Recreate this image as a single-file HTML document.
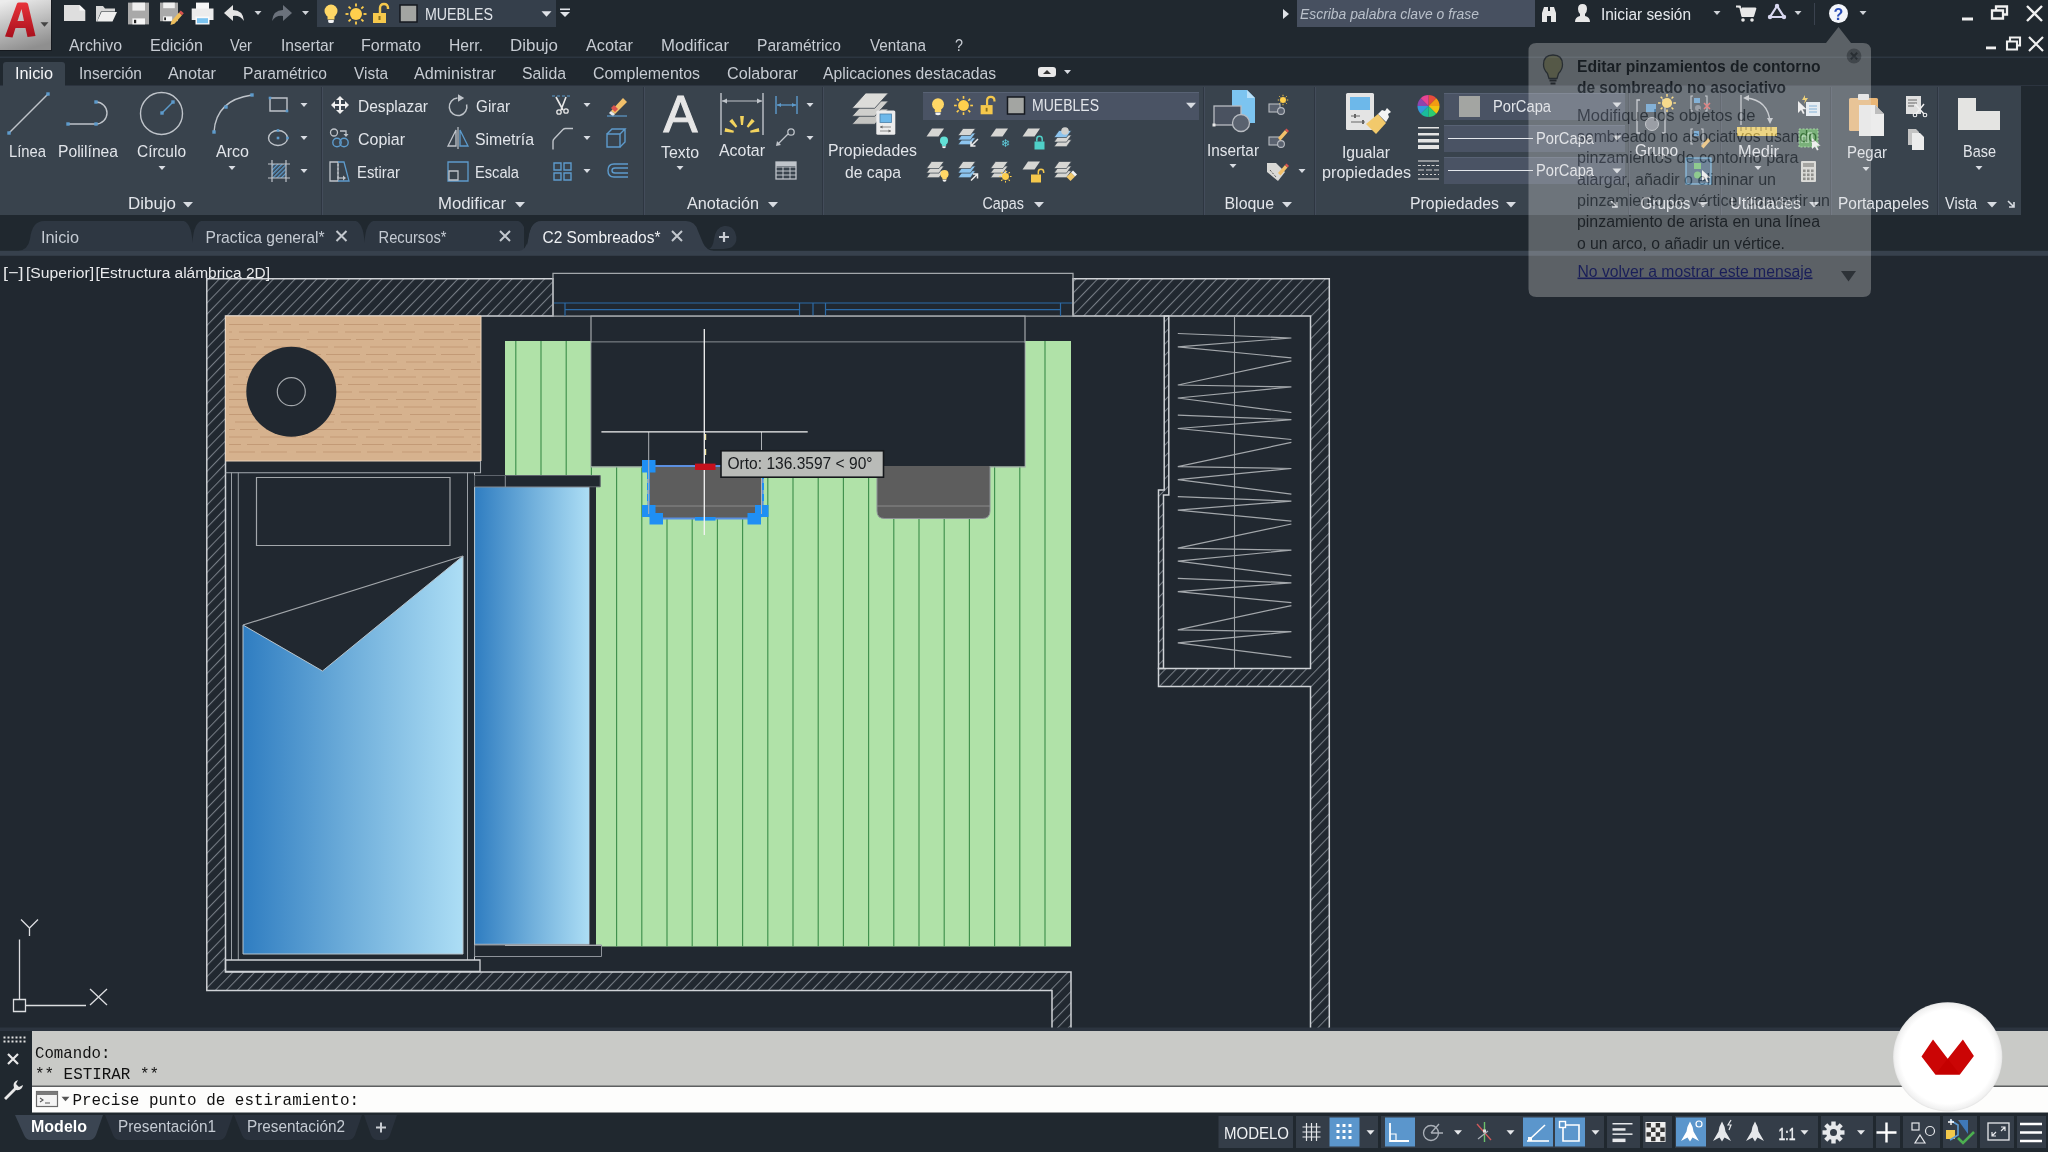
<!DOCTYPE html>
<html lang="es"><head><meta charset="utf-8"><title>AutoCAD - C2 Sombreados</title>
<style>
html,body{margin:0;padding:0;background:#212830;overflow:hidden}
svg{display:block;font-family:'Liberation Sans',sans-serif;will-change:transform;transform:translateZ(0)}
text{white-space:pre}
</style></head><body>
<svg width="2048" height="1152" viewBox="0 0 2048 1152">
<!-- p_chrome -->
<rect x="0" y="0" width="2048" height="1152" fill="#212830" />
<rect x="0" y="0" width="2048" height="256" fill="#20282f" />
<rect x="0" y="56.5" width="2048" height="1.6" fill="#2c3641" />
<rect x="0" y="86" width="2021" height="129" fill="#39434d" />
<rect x="0" y="85" width="2048" height="1" fill="#2c343f" />
<path d="M3 86V65q0-3 3-3h56q3 0 3 3V86z" fill="#39434d" stroke="none" stroke-width="1" />
<rect x="0" y="250.8" width="2048" height="5" fill="#37414d" />
<defs><linearGradient id="gA" x1="0.2" y1="0" x2="0.5" y2="1"><stop offset="0" stop-color="#ececec"/><stop offset="0.5" stop-color="#bdbdbd"/><stop offset="1" stop-color="#8f8f8f"/></linearGradient><linearGradient id="gR" x1="0" y1="0" x2="0" y2="1"><stop offset="0" stop-color="#e8343a"/><stop offset="1" stop-color="#a80f1c"/></linearGradient></defs>
<rect x="0" y="0" width="51" height="50" fill="url(#gA)" />
<rect x="51" y="0" width="1" height="51" fill="#15191f" />
<rect x="0" y="50" width="52" height="1" fill="#15191f" />
<path d="M5 36.5L17 3.5Q17.5 2.5 19 2.5H26Q27.5 2.5 28 4L35.5 36L27.5 37L25.5 28H15.5L12.5 37.5Z M17.5 21H24L21.5 9Z" fill="url(#gR)" stroke="none" stroke-width="1" fill-rule="evenodd"/>
<path d="M40.5 22.25h8l-4.0 4.5z" fill="#444"/>
<path d="M64 5h15.5l5.8 5.5V21H64z" fill="#dedede" stroke="none" stroke-width="1" />
<path d="M79.5 5v5.5h5.8z" fill="#fafafa" stroke="none" stroke-width="1" />
<path d="M96 21.5V6h7l2 2.5h10v3H101l-4 10z" fill="#d8d8d8" stroke="none" stroke-width="1" />
<path d="M101.5 12h15.5l-4.5 9.5H97z" fill="#efefef" stroke="none" stroke-width="1" />
<path d="M128 2.6h21v21.8h-21z" fill="#a9a9a9" stroke="none" stroke-width="1" />
<rect x="132.4" y="2.6" width="12.6" height="8" fill="#efefef" />
<rect x="132.4" y="18.4" width="12.6" height="6" fill="#f6f6f6" />
<rect x="134" y="19.8" width="2.2" height="3.4" fill="#222" />
<path d="M160 2.6h18v18.6h-18z" fill="#a9a9a9" stroke="none" stroke-width="1" />
<rect x="163.2" y="2.6" width="11.6" height="5.6" fill="#efefef" />
<rect x="163.2" y="16.4" width="9" height="4.8" fill="#f6f6f6" />
<rect x="164.2" y="17.4" width="1.8" height="2.8" fill="#222" />
<path d="M171.5 21l7.5-8.5 3 2.7-7.5 8.5-4 1.3z" fill="#eebf5e" stroke="none" stroke-width="1" />
<path d="M179 12.5l1.8-2 3 2.7-1.8 2z" fill="#d9534f" stroke="none" stroke-width="1" />
<rect x="196" y="2.6" width="13" height="7" fill="#f7f7f7" />
<path d="M191.7 8.5h21.8v11.5h-21.8z" fill="#ececec" stroke="none" stroke-width="1" />
<rect x="195.5" y="16.5" width="14" height="8" fill="#fafafa" />
<rect x="197" y="18.2" width="11" height="5" fill="#7cc4f0" />
<path d="M224 13l9-8v5q10 0 11 11q-4-6-11-5v5z" fill="#e4e4e4" stroke="none" stroke-width="1" />
<path d="M254.5 11.0h7l-3.5 4z" fill="#cfd3d8"/>
<path d="M292 13l-9-8v5q-10 0-11 11q4-6 11-5v5z" fill="#6b727c" stroke="none" stroke-width="1" />
<path d="M302.0 11.0h7l-3.5 4z" fill="#cfd3d8"/>
<rect x="317" y="0" width="239" height="27" fill="#353f4b" />
<g transform="translate(331,14) scale(1.0)"><circle cx="0" cy="-3" r="6.5" fill="#ffd766"/><path d="M-3.5 2h7v3.5h-7z" fill="#ffd766"/><path d="M-2.8 6h5.6v2.2q-2.8 1.8-5.6 0z" fill="#f4f4f4"/></g>
<g transform="translate(356,14) scale(1.0)"><circle r="6" fill="#ffcf4d"/><line x1="0" y1="-7.5" x2="0" y2="-10.5" transform="rotate(0)" stroke="#ffcf4d" stroke-width="1.8"/><line x1="0" y1="-7.5" x2="0" y2="-10.5" transform="rotate(45)" stroke="#ffcf4d" stroke-width="1.8"/><line x1="0" y1="-7.5" x2="0" y2="-10.5" transform="rotate(90)" stroke="#ffcf4d" stroke-width="1.8"/><line x1="0" y1="-7.5" x2="0" y2="-10.5" transform="rotate(135)" stroke="#ffcf4d" stroke-width="1.8"/><line x1="0" y1="-7.5" x2="0" y2="-10.5" transform="rotate(180)" stroke="#ffcf4d" stroke-width="1.8"/><line x1="0" y1="-7.5" x2="0" y2="-10.5" transform="rotate(225)" stroke="#ffcf4d" stroke-width="1.8"/><line x1="0" y1="-7.5" x2="0" y2="-10.5" transform="rotate(270)" stroke="#ffcf4d" stroke-width="1.8"/><line x1="0" y1="-7.5" x2="0" y2="-10.5" transform="rotate(315)" stroke="#ffcf4d" stroke-width="1.8"/></g>
<g transform="translate(381,14) scale(1.0)"><path d="M-1 -1v-5q0-4 4-4t4 4v1" fill="none" stroke="#f5c84c" stroke-width="2.4"/><rect x="-8" y="-1" width="13" height="10" fill="#f5c84c"/><rect x="-2.5" y="2" width="2" height="4" fill="#8a6d1c"/></g>
<rect x="400" y="5" width="17" height="17" fill="#a3a5a2" stroke="#15191f" stroke-width="1.5"/>
<text x="425" y="20" font-size="16.3" fill="#dfe3e8" textLength="68" lengthAdjust="spacingAndGlyphs" >MUEBLES</text>
<path d="M541.5 11.25h10l-5.0 5.5z" fill="#e0e3e8"/>
<rect x="560" y="8.5" width="10" height="1.6" fill="#e0e3e8" />
<path d="M560.0 12.0h10l-5.0 5z" fill="#e0e3e8"/>
<text x="69" y="50.8" font-size="16.3" fill="#c6cbd2" textLength="53" lengthAdjust="spacingAndGlyphs" >Archivo</text>
<text x="150" y="50.8" font-size="16.3" fill="#c6cbd2" textLength="53" lengthAdjust="spacingAndGlyphs" >Edición</text>
<text x="230" y="50.8" font-size="16.3" fill="#c6cbd2" textLength="22" lengthAdjust="spacingAndGlyphs" >Ver</text>
<text x="281" y="50.8" font-size="16.3" fill="#c6cbd2" textLength="53" lengthAdjust="spacingAndGlyphs" >Insertar</text>
<text x="361" y="50.8" font-size="16.3" fill="#c6cbd2" textLength="60" lengthAdjust="spacingAndGlyphs" >Formato</text>
<text x="449" y="50.8" font-size="16.3" fill="#c6cbd2" textLength="34" lengthAdjust="spacingAndGlyphs" >Herr.</text>
<text x="510" y="50.8" font-size="16.3" fill="#c6cbd2" textLength="48" lengthAdjust="spacingAndGlyphs" >Dibujo</text>
<text x="586" y="50.8" font-size="16.3" fill="#c6cbd2" textLength="47" lengthAdjust="spacingAndGlyphs" >Acotar</text>
<text x="661" y="50.8" font-size="16.3" fill="#c6cbd2" textLength="68" lengthAdjust="spacingAndGlyphs" >Modificar</text>
<text x="757" y="50.8" font-size="16.3" fill="#c6cbd2" textLength="84" lengthAdjust="spacingAndGlyphs" >Paramétrico</text>
<text x="870" y="50.8" font-size="16.3" fill="#c6cbd2" textLength="56" lengthAdjust="spacingAndGlyphs" >Ventana</text>
<text x="955" y="50.8" font-size="16.3" fill="#c6cbd2" textLength="8" lengthAdjust="spacingAndGlyphs" >?</text>
<text x="15" y="78.5" font-size="16.3" fill="#f4f5f7" textLength="38" lengthAdjust="spacingAndGlyphs" >Inicio</text>
<text x="79" y="78.5" font-size="16.3" fill="#c6cbd2" textLength="63" lengthAdjust="spacingAndGlyphs" >Inserción</text>
<text x="168" y="78.5" font-size="16.3" fill="#c6cbd2" textLength="48" lengthAdjust="spacingAndGlyphs" >Anotar</text>
<text x="243" y="78.5" font-size="16.3" fill="#c6cbd2" textLength="84" lengthAdjust="spacingAndGlyphs" >Paramétrico</text>
<text x="354" y="78.5" font-size="16.3" fill="#c6cbd2" textLength="34" lengthAdjust="spacingAndGlyphs" >Vista</text>
<text x="414" y="78.5" font-size="16.3" fill="#c6cbd2" textLength="82" lengthAdjust="spacingAndGlyphs" >Administrar</text>
<text x="522" y="78.5" font-size="16.3" fill="#c6cbd2" textLength="44" lengthAdjust="spacingAndGlyphs" >Salida</text>
<text x="593" y="78.5" font-size="16.3" fill="#c6cbd2" textLength="107" lengthAdjust="spacingAndGlyphs" >Complementos</text>
<text x="727" y="78.5" font-size="16.3" fill="#c6cbd2" textLength="71" lengthAdjust="spacingAndGlyphs" >Colaborar</text>
<text x="823" y="78.5" font-size="16.3" fill="#c6cbd2" textLength="173" lengthAdjust="spacingAndGlyphs" >Aplicaciones destacadas</text>
<rect x="1038" y="67" width="18" height="10" fill="#e8e8e8" rx="3"/>
<path d="M1043 74l4-4 4 4z" fill="#333" stroke="none" stroke-width="1" />
<path d="M1064.0 70.0h7l-3.5 4z" fill="#d8dce2"/>
<path d="M1283 9v10l6-5z" fill="#e0e3e8" stroke="none" stroke-width="1" />
<rect x="1297" y="0" width="238" height="27" fill="#475060" />
<text x="1300" y="19" font-size="14.5" fill="#b9c0ca" textLength="179" lengthAdjust="spacingAndGlyphs" font-style="italic" >Escriba palabra clave o frase</text>
<path d="M1542 22v-9l2-6h4v4h2V7h4l2 6v9h-5v-6h-4v6z" fill="#e8e8e8" stroke="none" stroke-width="1" />
<path d="M1575 22q0-5 5-6v-2q-2-2-2-5q0-5 4.5-5t4.5 5q0 3-2 5v2q5 1 5 6z" fill="#e8e8e8" stroke="none" stroke-width="1" />
<text x="1601" y="19.5" font-size="16.3" fill="#e6e9ee" textLength="90" lengthAdjust="spacingAndGlyphs" >Iniciar sesión</text>
<path d="M1713.5 11.0h7l-3.5 4z" fill="#cfd3d8"/>
<path d="M1736 6.5h4l2.2 9.5h11l2.3-7.5h-13.5" fill="#e8e8e8" stroke="#e8e8e8" stroke-width="1.8" stroke-linejoin="round"/>
<circle cx="1743" cy="20" r="1.8" fill="#e8e8e8"/><circle cx="1752" cy="20" r="1.8" fill="#e8e8e8"/>
<path d="M1777 6l-7 11h14z" fill="none" stroke="#d8d8f0" stroke-width="2.2" />
<circle cx="1777" cy="6" r="2.2" fill="#d8d8f0"/><circle cx="1770" cy="17" r="2.2" fill="#d8d8f0"/><circle cx="1784" cy="17" r="2.2" fill="#d8d8f0"/>
<path d="M1794.5 11.0h7l-3.5 4z" fill="#cfd3d8"/>
<rect x="1814" y="3" width="1" height="22" fill="#3a424e" />
<circle cx="1838.5" cy="13.5" r="9.5" fill="#f4f6fb"/>
<text x="1838.5" y="19.5" font-size="16" fill="#2c4fb8" font-weight="bold" text-anchor="middle" >?</text>
<path d="M1859.5 11.0h7l-3.5 4z" fill="#cfd3d8"/>
<rect x="1962" y="17.5" width="11" height="3" fill="#f0f0f0" />
<path d="M1992 10.5h11v8h-11z M1996 10V6.5h11v8h-4" fill="none" stroke="#f0f0f0" stroke-width="2.3" />
<path d="M2027 6l15 15M2042 6l-15 15" fill="none" stroke="#f0f0f0" stroke-width="2.4" />
<rect x="1986" y="46.5" width="10" height="2.8" fill="#f0f0f0" />
<path d="M2007 41.5h10v8h-10z M2010 41v-3.5h10v8h-3" fill="none" stroke="#f0f0f0" stroke-width="2.1" />
<path d="M2029 37l14 14M2043 37l-14 14" fill="none" stroke="#f0f0f0" stroke-width="2.2" />
<path d="M18 251Q28 250 30 239Q32 221 44 221H524V251Z" fill="#2e3742" stroke="none" stroke-width="1" />
<path d="M181.5 220.5Q191.5 221 192.5 243Q193.5 221 203.5 220.5Z" fill="#20282f" stroke="none" stroke-width="1" />
<path d="M353.5 220.5Q363.5 221 364.5 243Q365.5 221 375.5 220.5Z" fill="#20282f" stroke="none" stroke-width="1" />
<path d="M519 251Q526 250 528 240Q530 221 541 221H686Q695 221 698 231L703 243Q706 250 714 251Z" fill="#363f4b" stroke="none" stroke-width="1" />
<path d="M516 220.5Q526 221 527.5 245Q529 221 540 220.5Z" fill="#20282f" stroke="none" stroke-width="1" />
<path d="M709 249q4-2 5-10q2-12 10-13q8-1 11 6q4 10-3 15q-4 2-12 2z" fill="#2e3742" stroke="none" stroke-width="1" />
<text x="41" y="243" font-size="16.3" fill="#c4cad2" textLength="38" lengthAdjust="spacingAndGlyphs" >Inicio</text>
<text x="205.5" y="243" font-size="16.3" fill="#c4cad2" textLength="119" lengthAdjust="spacingAndGlyphs" >Practica general*</text>
<text x="378.5" y="243" font-size="16.3" fill="#c4cad2" textLength="68" lengthAdjust="spacingAndGlyphs" >Recursos*</text>
<text x="542.5" y="243" font-size="16.3" fill="#eef0f3" textLength="118" lengthAdjust="spacingAndGlyphs" >C2 Sombreados*</text>
<path d="M336.5 231l10 10M346.5 231l-10 10" fill="none" stroke="#c3c8ce" stroke-width="2" />
<path d="M500 231l10 10M510 231l-10 10" fill="none" stroke="#c3c8ce" stroke-width="2" />
<path d="M672 231l10 10M682 231l-10 10" fill="none" stroke="#c3c8ce" stroke-width="2" />
<path d="M719 237h10M724 232v10" fill="none" stroke="#c8ccd2" stroke-width="2.2" />
<!-- p_ribbon -->
<rect x="321" y="87" width="1" height="128" fill="#2e3641" />
<rect x="322" y="87" width="1" height="128" fill="#434c5a" />
<rect x="643" y="87" width="1" height="128" fill="#2e3641" />
<rect x="644" y="87" width="1" height="128" fill="#434c5a" />
<rect x="822" y="87" width="1" height="128" fill="#2e3641" />
<rect x="823" y="87" width="1" height="128" fill="#434c5a" />
<rect x="1203" y="87" width="1" height="128" fill="#2e3641" />
<rect x="1204" y="87" width="1" height="128" fill="#434c5a" />
<rect x="1314" y="87" width="1" height="128" fill="#2e3641" />
<rect x="1315" y="87" width="1" height="128" fill="#434c5a" />
<rect x="1628" y="87" width="1" height="128" fill="#2e3641" />
<rect x="1629" y="87" width="1" height="128" fill="#434c5a" />
<rect x="1720" y="87" width="1" height="128" fill="#2e3641" />
<rect x="1721" y="87" width="1" height="128" fill="#434c5a" />
<rect x="1830" y="87" width="1" height="128" fill="#2e3641" />
<rect x="1831" y="87" width="1" height="128" fill="#434c5a" />
<rect x="1937" y="87" width="1" height="128" fill="#2e3641" />
<rect x="1938" y="87" width="1" height="128" fill="#434c5a" />
<text x="128" y="209.3" font-size="16.3" fill="#e2e5ea" textLength="48" lengthAdjust="spacingAndGlyphs" >Dibujo</text>
<path d="M183.0 202.05h10l-5.0 5.5z" fill="#d8dce2"/>
<text x="438" y="209.3" font-size="16.3" fill="#e2e5ea" textLength="68" lengthAdjust="spacingAndGlyphs" >Modificar</text>
<path d="M515.0 202.05h10l-5.0 5.5z" fill="#d8dce2"/>
<text x="687" y="209.3" font-size="16.3" fill="#e2e5ea" textLength="72" lengthAdjust="spacingAndGlyphs" >Anotación</text>
<path d="M768.0 202.05h10l-5.0 5.5z" fill="#d8dce2"/>
<text x="982.5" y="209.3" font-size="16.3" fill="#e2e5ea" textLength="41.5" lengthAdjust="spacingAndGlyphs" >Capas</text>
<path d="M1034.0 202.05h10l-5.0 5.5z" fill="#d8dce2"/>
<text x="1224.5" y="209.3" font-size="16.3" fill="#e2e5ea" textLength="49.5" lengthAdjust="spacingAndGlyphs" >Bloque</text>
<path d="M1282.0 202.05h10l-5.0 5.5z" fill="#d8dce2"/>
<text x="1410" y="209.3" font-size="16.3" fill="#e2e5ea" textLength="89" lengthAdjust="spacingAndGlyphs" >Propiedades</text>
<path d="M1506.0 202.05h10l-5.0 5.5z" fill="#d8dce2"/>
<text x="1640.5" y="209.3" font-size="16.3" fill="#e2e5ea" textLength="50.0" lengthAdjust="spacingAndGlyphs" >Grupos</text>
<path d="M1698.0 202.05h10l-5.0 5.5z" fill="#d8dce2"/>
<text x="1730" y="209.3" font-size="16.3" fill="#e2e5ea" textLength="71" lengthAdjust="spacingAndGlyphs" >Utilidades</text>
<path d="M1809.0 202.05h10l-5.0 5.5z" fill="#d8dce2"/>
<text x="1838" y="209.3" font-size="16.3" fill="#e2e5ea" textLength="91" lengthAdjust="spacingAndGlyphs" >Portapapeles</text>
<text x="1945" y="209.3" font-size="16.3" fill="#e2e5ea" textLength="32" lengthAdjust="spacingAndGlyphs" >Vista</text>
<path d="M1987.0 202.05h10l-5.0 5.5z" fill="#d8dce2"/>
<path d="M2008 201l6 6M2014 202v5h-5" fill="none" stroke="#d8dce2" stroke-width="1.6" />
<path d="M1611 201l6 6M1617 202v5h-5" fill="none" stroke="#d8dce2" stroke-width="1.6" />
<line x1="9" y1="133" x2="48" y2="94" stroke="#bfc4ca" stroke-width="1.4" />
<rect x="7.3" y="131.3" width="3.4" height="3.4" fill="#5d9bcc" />
<rect x="46.3" y="92.3" width="3.4" height="3.4" fill="#5d9bcc" />
<text x="9" y="156.6" font-size="16.3" fill="#e2e5ea" textLength="37" lengthAdjust="spacingAndGlyphs" >Línea</text>
<path d="M68 124H96A11 11 0 0 0 96 102" fill="none" stroke="#bfc4ca" stroke-width="1.4" />
<rect x="66.3" y="122.3" width="3.4" height="3.4" fill="#5d9bcc" />
<rect x="94.3" y="122.3" width="3.4" height="3.4" fill="#5d9bcc" />
<rect x="94.3" y="100.3" width="3.4" height="3.4" fill="#5d9bcc" />
<text x="58" y="156.6" font-size="16.3" fill="#e2e5ea" textLength="60" lengthAdjust="spacingAndGlyphs" >Polilínea</text>
<circle cx="161.5" cy="113.5" r="21" fill="none" stroke="#bfc4ca" stroke-width="1.4"/>
<line x1="162" y1="113" x2="173" y2="102" stroke="#5d9bcc" stroke-width="1.5" />
<rect x="160.3" y="111.3" width="3.4" height="3.4" fill="#5d9bcc" />
<rect x="171.3" y="100.3" width="3.4" height="3.4" fill="#5d9bcc" />
<text x="137" y="157.4" font-size="16.3" fill="#e2e5ea" textLength="49" lengthAdjust="spacingAndGlyphs" >Círculo</text>
<path d="M158.5 166.0h7l-3.5 4z" fill="#d8dce2"/>
<path d="M214 132Q216 100 252 95" fill="none" stroke="#bfc4ca" stroke-width="1.4" />
<rect x="212.3" y="130.3" width="3.4" height="3.4" fill="#5d9bcc" />
<rect x="224.3" y="105.3" width="3.4" height="3.4" fill="#5d9bcc" />
<rect x="250.3" y="93.3" width="3.4" height="3.4" fill="#5d9bcc" />
<text x="216" y="157.4" font-size="16.3" fill="#e2e5ea" textLength="33" lengthAdjust="spacingAndGlyphs" >Arco</text>
<path d="M228.5 166.0h7l-3.5 4z" fill="#d8dce2"/>
<path d="M270 98h17v13h-17z" fill="none" stroke="#bfc4ca" stroke-width="1.4" />
<rect x="268.7" y="96.7" width="2.6" height="2.6" fill="#5d9bcc" />
<rect x="285.7" y="109.7" width="2.6" height="2.6" fill="#5d9bcc" />
<ellipse cx="278" cy="138" rx="9.5" ry="7.5" fill="none" stroke="#bfc4ca" stroke-width="1.4"/>
<rect x="276.7" y="136.7" width="2.6" height="2.6" fill="#5d9bcc" />
<rect x="286.2" y="136.7" width="2.6" height="2.6" fill="#5d9bcc" />
<rect x="276.7" y="129.2" width="2.6" height="2.6" fill="#5d9bcc" />
<pattern id="hh" width="3" height="3" patternUnits="userSpaceOnUse" patternTransform="rotate(-45)"><rect width="3" height="1.4" fill="#5d9bcc"/></pattern>
<rect x="272" y="164" width="14" height="14" fill="url(#hh)" />
<path d="M272 160v22M286 160v22M268 164h22M268 178h22" fill="none" stroke="#bfc4ca" stroke-width="1.2" />
<path d="M300.5 103.0h7l-3.5 4z" fill="#d8dce2"/>
<path d="M300.5 136.0h7l-3.5 4z" fill="#d8dce2"/>
<path d="M300.5 169.0h7l-3.5 4z" fill="#d8dce2"/>
<path d="M340 96l4 4h-3v4h4v-3l4 4-4 4v-3h-4v4h3l-4 4-4-4h3v-4h-4v3l-4-4 4-4v3h4v-4h-3z" fill="#f0f0f0" stroke="none" stroke-width="1" />
<text x="358" y="112" font-size="16.3" fill="#e2e5ea" textLength="70" lengthAdjust="spacingAndGlyphs" >Desplazar</text>
<circle cx="334" cy="132.5" r="3.5" fill="none" stroke="#bfc4ca" stroke-width="1.3"/>
<circle cx="337" cy="142.5" r="4.2" fill="none" stroke="#5d9bcc" stroke-width="1.4"/><circle cx="344" cy="142.5" r="4.2" fill="none" stroke="#5d9bcc" stroke-width="1.4"/>
<path d="M340 131h6v4" fill="none" stroke="#bfc4ca" stroke-width="1.3" />
<path d="M343.5 134h5l-2.5 3z" fill="#bfc4ca" stroke="none" stroke-width="1" />
<text x="358" y="145" font-size="16.3" fill="#e2e5ea" textLength="47" lengthAdjust="spacingAndGlyphs" >Copiar</text>
<path d="M330 162h8v19h-8z" fill="none" stroke="#bfc4ca" stroke-width="1.3" />
<path d="M338 162h6l5 19h-11" fill="none" stroke="#5d9bcc" stroke-width="1.3" />
<path d="M338 164v14" fill="none" stroke="#bfc4ca" stroke-width="1" stroke-dasharray="2 2"/>
<path d="M337 178h7" fill="none" stroke="#bfc4ca" stroke-width="1.2" />
<path d="M343 175.5l3 2.5-3 2.5z" fill="#bfc4ca" stroke="none" stroke-width="1" />
<text x="357" y="178" font-size="16.3" fill="#e2e5ea" textLength="43" lengthAdjust="spacingAndGlyphs" >Estirar</text>
<path d="M457.5 98A8.8 8.8 0 1 0 466.6 104.5" fill="none" stroke="#bfc4ca" stroke-width="1.5" />
<path d="M458 94.3l6.2 3.7-6.2 3.7z" fill="#bfc4ca" stroke="none" stroke-width="1" />
<text x="476" y="112" font-size="16.3" fill="#e2e5ea" textLength="34" lengthAdjust="spacingAndGlyphs" >Girar</text>
<path d="M456 130l-8 16h8z" fill="none" stroke="#bfc4ca" stroke-width="1.3" />
<path d="M460 130l8 16h-8z" fill="none" stroke="#5d9bcc" stroke-width="1.3" />
<line x1="458" y1="127" x2="458" y2="149" stroke="#bfc4ca" stroke-width="1.2" />
<text x="475" y="145" font-size="16.3" fill="#e2e5ea" textLength="59" lengthAdjust="spacingAndGlyphs" >Simetría</text>
<path d="M448 162h20v19h-20z" fill="none" stroke="#5d9bcc" stroke-width="1.3" />
<path d="M449 171h9v9h-9z" fill="none" stroke="#bfc4ca" stroke-width="1.3" />
<text x="475" y="178" font-size="16.3" fill="#e2e5ea" textLength="44" lengthAdjust="spacingAndGlyphs" >Escala</text>
<path d="M556 97l7 13M566 97l-5 13" fill="none" stroke="#e8e8e8" stroke-width="1.6" />
<circle cx="559" cy="112" r="2.2" fill="none" stroke="#e8e8e8" stroke-width="1.3"/><circle cx="566" cy="111" r="2.2" fill="none" stroke="#e8e8e8" stroke-width="1.3"/>
<line x1="552" y1="96" x2="572" y2="96" stroke="#5d9bcc" stroke-width="1" stroke-dasharray="3 2"/>
<path d="M553 149.5V141.5Q553 140 554 139L563 129.5Q564 128.5 565.5 128.5H573" fill="none" stroke="#bfc4ca" stroke-width="1.4" />
<path d="M554 163h7v7h-7z" fill="none" stroke="#5d9bcc" stroke-width="1.4" />
<path d="M564 163h7v7h-7z" fill="none" stroke="#5d9bcc" stroke-width="1.4" />
<path d="M554 173h7v7h-7z" fill="none" stroke="#5d9bcc" stroke-width="1.4" />
<path d="M564 173h7v7h-7z" fill="none" stroke="#5d9bcc" stroke-width="1.4" />
<path d="M583.5 103.0h7l-3.5 4z" fill="#d8dce2"/>
<path d="M583.5 136.0h7l-3.5 4z" fill="#d8dce2"/>
<path d="M583.5 169.0h7l-3.5 4z" fill="#d8dce2"/>
<path d="M611 111l12-13 4 4-12 12z" fill="#f2c06a" stroke="none" stroke-width="1" />
<path d="M609 113l2-2 4 3-2 2.5z" fill="#e8e8e8" stroke="none" stroke-width="1" />
<path d="M611 108l3-3 4 4-3 3z" fill="#d9534f" stroke="none" stroke-width="1" />
<line x1="607" y1="116" x2="627" y2="116" stroke="#5d9bcc" stroke-width="1.2" />
<path d="M607 134h13v13h-13z" fill="none" stroke="#5d9bcc" stroke-width="1.4" />
<path d="M607 134l5-5h13l-5 5M625 129v13l-5 5" fill="none" stroke="#5d9bcc" stroke-width="1.4" />
<path d="M628 164h-14q-6 0-6 6.5t6 6.5h14M628 168h-13q-3 0-3 2.5t3 2.5h13" fill="none" stroke="#5d9bcc" stroke-width="1.4" />
<text x="680.5" y="132" font-size="51.5" fill="#e6e6e6" textLength="34" lengthAdjust="spacingAndGlyphs" text-anchor="middle" stroke="#e6e6e6" stroke-width="1.1">A</text>
<text x="661" y="157.5" font-size="16.3" fill="#e2e5ea" textLength="38" lengthAdjust="spacingAndGlyphs" >Texto</text>
<path d="M676.5 166.0h7l-3.5 4z" fill="#d8dce2"/>
<path d="M721 93v42M763 93v42" fill="none" stroke="#bfc4ca" stroke-width="1.4" />
<line x1="722" y1="101" x2="762" y2="101" stroke="#bfc4ca" stroke-width="1.2" />
<path d="M722 101l5-2.5v5zM762 101l-5-2.5v5z" fill="#bfc4ca" stroke="none" stroke-width="1" />
<path d="M-1.9 -17.5h3.8l-0.9 9h-2z" fill="#f3d35e" transform="translate(742,133.5) rotate(-78)"/>
<path d="M-1.9 -17.5h3.8l-0.9 9h-2z" fill="#f3d35e" transform="translate(742,133.5) rotate(-40)"/>
<path d="M-1.9 -17.5h3.8l-0.9 9h-2z" fill="#f3d35e" transform="translate(742,133.5) rotate(0)"/>
<path d="M-1.9 -17.5h3.8l-0.9 9h-2z" fill="#f3d35e" transform="translate(742,133.5) rotate(40)"/>
<path d="M-1.9 -17.5h3.8l-0.9 9h-2z" fill="#f3d35e" transform="translate(742,133.5) rotate(78)"/>
<text x="719" y="156.3" font-size="16.3" fill="#e2e5ea" textLength="46" lengthAdjust="spacingAndGlyphs" >Acotar</text>
<path d="M776 96v18M797 96v18" fill="none" stroke="#5d9bcc" stroke-width="1.4" />
<line x1="777" y1="105" x2="796" y2="105" stroke="#5d9bcc" stroke-width="1.3" />
<path d="M777 105l4-2v4zM796 105l-4-2v4z" fill="#5d9bcc" stroke="none" stroke-width="1" />
<path d="M778 144l10-10" fill="none" stroke="#bfc4ca" stroke-width="1.3" />
<circle cx="791" cy="132" r="3.2" fill="none" stroke="#bfc4ca" stroke-width="1.3"/>
<path d="M776 146l1-5 4 4z" fill="#bfc4ca" stroke="none" stroke-width="1" />
<rect x="776" y="162" width="20" height="17" fill="none" stroke="#bfc4ca" stroke-width="1.3"/>
<path d="M776 167h20M776 171h20M776 175h20M783 167v12M790 167v12" fill="none" stroke="#bfc4ca" stroke-width="1" />
<rect x="776" y="162" width="20" height="4" fill="#bfc4ca" />
<path d="M806.5 103.0h7l-3.5 4z" fill="#d8dce2"/>
<path d="M806.5 136.0h7l-3.5 4z" fill="#d8dce2"/>
<path d="M852 124.3h22.7l13.7 -15.3h-22.7z" fill="#c4c4c1" stroke="#39434d" stroke-width="0.8" />
<path d="M852 116.3h22.7l13.7 -15.3h-22.7z" fill="#cfcfcc" stroke="#39434d" stroke-width="0.8" />
<path d="M852 108.3h22.7l13.7 -15.3h-22.7z" fill="#dcdcd9" stroke="#39434d" stroke-width="0.8" />
<rect x="876.3" y="110.6" width="19" height="24.2" fill="#ececec" rx="1.5"/>
<rect x="880" y="114" width="11.5" height="8.5" fill="#6db8ea" stroke="#4a7fa8" stroke-width="0.8"/>
<path d="M880 127h11M880 131h11" fill="none" stroke="#8a8a8a" stroke-width="1" />
<path d="M880 127l2.5-1.5v3zM891 131l-2.5-1.5v3z" fill="#666" stroke="none" stroke-width="1" />
<text x="828" y="156.3" font-size="16.3" fill="#e2e5ea" textLength="89" lengthAdjust="spacingAndGlyphs" >Propiedades</text>
<text x="845" y="177.8" font-size="16.3" fill="#e2e5ea" textLength="56" lengthAdjust="spacingAndGlyphs" >de capa</text>
<rect x="923" y="92" width="276" height="28" fill="#4a5364" />
<rect x="923" y="92" width="276" height="1" fill="#586274" />
<g transform="translate(938,107) scale(0.92)"><circle cx="0" cy="-3" r="6.5" fill="#ffd766"/><path d="M-3.5 2h7v3.5h-7z" fill="#ffd766"/><path d="M-2.8 6h5.6v2.2q-2.8 1.8-5.6 0z" fill="#f4f4f4"/></g>
<g transform="translate(963.5,105.5) scale(0.9)"><circle r="6" fill="#ffcf4d"/><line x1="0" y1="-7.5" x2="0" y2="-10.5" transform="rotate(0)" stroke="#ffcf4d" stroke-width="1.8"/><line x1="0" y1="-7.5" x2="0" y2="-10.5" transform="rotate(45)" stroke="#ffcf4d" stroke-width="1.8"/><line x1="0" y1="-7.5" x2="0" y2="-10.5" transform="rotate(90)" stroke="#ffcf4d" stroke-width="1.8"/><line x1="0" y1="-7.5" x2="0" y2="-10.5" transform="rotate(135)" stroke="#ffcf4d" stroke-width="1.8"/><line x1="0" y1="-7.5" x2="0" y2="-10.5" transform="rotate(180)" stroke="#ffcf4d" stroke-width="1.8"/><line x1="0" y1="-7.5" x2="0" y2="-10.5" transform="rotate(225)" stroke="#ffcf4d" stroke-width="1.8"/><line x1="0" y1="-7.5" x2="0" y2="-10.5" transform="rotate(270)" stroke="#ffcf4d" stroke-width="1.8"/><line x1="0" y1="-7.5" x2="0" y2="-10.5" transform="rotate(315)" stroke="#ffcf4d" stroke-width="1.8"/></g>
<g transform="translate(988,106) scale(0.92)"><path d="M-1 -1v-5q0-4 4-4t4 4v1" fill="none" stroke="#f5c84c" stroke-width="2.4"/><rect x="-8" y="-1" width="13" height="10" fill="#f5c84c"/><rect x="-2.5" y="2" width="2" height="4" fill="#8a6d1c"/></g>
<rect x="1007.5" y="97" width="17" height="17" fill="#a3a5a2" stroke="#15191f" stroke-width="1.5"/>
<text x="1032" y="111.2" font-size="16.3" fill="#e2e5ea" textLength="67" lengthAdjust="spacingAndGlyphs" >MUEBLES</text>
<path d="M1186.0 102.75h10l-5.0 5.5z" fill="#d8dce2"/>
<path d="M926.5 136.5l5.5 -8h12l-5.5 8z" fill="#d6d6d3" stroke="none" stroke-width="1" />
<g transform="translate(944,142.5) scale(0.62)"><circle cx="0" cy="-3" r="6.5" fill="#62e0d6"/><path d="M-3.5 2h7v3.5h-7z" fill="#62e0d6"/><path d="M-2.8 6h5.6v2.2q-2.8 1.8-5.6 0z" fill="#f4f4f4"/></g>
<path d="M958 144.7l5 -7h12.5l-5 7z" fill="#8cc4ee" stroke="#39434d" stroke-width="0.7" /><path d="M958 140.1l5 -7h12.5l-5 7z" fill="#8cc4ee" stroke="#39434d" stroke-width="0.7" /><path d="M958 135.5l5 -7h12.5l-5 7z" fill="#d6d6d3" stroke="#39434d" stroke-width="0.7" />
<path d="M978 139l-6.5 6.5M971 141.5v4.5h4.5" fill="none" stroke="#ececec" stroke-width="1.5" />
<path d="M990.5 136.5l5.5 -8h12l-5.5 8z" fill="#d6d6d3" stroke="none" stroke-width="1" />
<text x="1005.5" y="147" font-size="11" fill="#5fd0e0" text-anchor="middle" >❄</text>
<path d="M1022.5 136.5l5.5 -8h12l-5.5 8z" fill="#d6d6d3" stroke="none" stroke-width="1" />
<rect x="1034.5" y="141.5" width="10" height="8" fill="#4fd0c8" />
<path d="M1036.8 141.5v-2.5q0-2.7 2.7-2.7t2.7 2.7v2.5" fill="none" stroke="#4fd0c8" stroke-width="1.5" />
<path d="M1054 146.7l5 -7h12.5l-5 7z" fill="#d6d6d3" stroke="#39434d" stroke-width="0.7" /><path d="M1054 142.1l5 -7h12.5l-5 7z" fill="#d6d6d3" stroke="#39434d" stroke-width="0.7" /><path d="M1054 137.5l5 -7h12.5l-5 7z" fill="#8cc4ee" stroke="#39434d" stroke-width="0.7" />
<circle cx="1065" cy="131" r="3.8" fill="#d0d0cd"/>
<path d="M926.5 177.7l5 -7h12.5l-5 7z" fill="#d6d6d3" stroke="#39434d" stroke-width="0.7" /><path d="M926.5 173.1l5 -7h12.5l-5 7z" fill="#d6d6d3" stroke="#39434d" stroke-width="0.7" /><path d="M926.5 168.5l5 -7h12.5l-5 7z" fill="#d6d6d3" stroke="#39434d" stroke-width="0.7" />
<g transform="translate(944.5,176) scale(0.62)"><circle cx="0" cy="-3" r="6.5" fill="#ffd766"/><path d="M-3.5 2h7v3.5h-7z" fill="#ffd766"/><path d="M-2.8 6h5.6v2.2q-2.8 1.8-5.6 0z" fill="#f4f4f4"/></g>
<path d="M958 177.7l5 -7h12.5l-5 7z" fill="#8cc4ee" stroke="#39434d" stroke-width="0.7" /><path d="M958 173.1l5 -7h12.5l-5 7z" fill="#8cc4ee" stroke="#39434d" stroke-width="0.7" /><path d="M958 168.5l5 -7h12.5l-5 7z" fill="#d6d6d3" stroke="#39434d" stroke-width="0.7" />
<path d="M971 180.5l6.5-6.5M973 174h4.5v4.5" fill="none" stroke="#ececec" stroke-width="1.5" />
<path d="M990.5 177.7l5 -7h12.5l-5 7z" fill="#d6d6d3" stroke="#39434d" stroke-width="0.7" /><path d="M990.5 173.1l5 -7h12.5l-5 7z" fill="#d6d6d3" stroke="#39434d" stroke-width="0.7" /><path d="M990.5 168.5l5 -7h12.5l-5 7z" fill="#d6d6d3" stroke="#39434d" stroke-width="0.7" />
<g transform="translate(1005.5,176.5) scale(0.58)"><circle r="6" fill="#ffcf4d"/><line x1="0" y1="-7.5" x2="0" y2="-10.5" transform="rotate(0)" stroke="#ffcf4d" stroke-width="1.8"/><line x1="0" y1="-7.5" x2="0" y2="-10.5" transform="rotate(45)" stroke="#ffcf4d" stroke-width="1.8"/><line x1="0" y1="-7.5" x2="0" y2="-10.5" transform="rotate(90)" stroke="#ffcf4d" stroke-width="1.8"/><line x1="0" y1="-7.5" x2="0" y2="-10.5" transform="rotate(135)" stroke="#ffcf4d" stroke-width="1.8"/><line x1="0" y1="-7.5" x2="0" y2="-10.5" transform="rotate(180)" stroke="#ffcf4d" stroke-width="1.8"/><line x1="0" y1="-7.5" x2="0" y2="-10.5" transform="rotate(225)" stroke="#ffcf4d" stroke-width="1.8"/><line x1="0" y1="-7.5" x2="0" y2="-10.5" transform="rotate(270)" stroke="#ffcf4d" stroke-width="1.8"/><line x1="0" y1="-7.5" x2="0" y2="-10.5" transform="rotate(315)" stroke="#ffcf4d" stroke-width="1.8"/></g>
<path d="M1022.5 169.5l5.5 -8h12l-5.5 8z" fill="#d6d6d3" stroke="none" stroke-width="1" />
<rect x="1031" y="174.5" width="10" height="8" fill="#f5c84c" />
<path d="M1038.3 174.5v-2.5q0-2.7 2.7-2.7t2.7 2.7v1" fill="none" stroke="#f5c84c" stroke-width="1.5" />
<path d="M1054 177.7l5 -7h12.5l-5 7z" fill="#d6d6d3" stroke="#39434d" stroke-width="0.7" /><path d="M1054 173.1l5 -7h12.5l-5 7z" fill="#d6d6d3" stroke="#39434d" stroke-width="0.7" /><path d="M1054 168.5l5 -7h12.5l-5 7z" fill="#d6d6d3" stroke="#39434d" stroke-width="0.7" />
<path d="M1066.5 177l4.5-4.5 4 4-4.5 4.5z" fill="#f2c96b" stroke="none" stroke-width="1" />
<path d="M1071 172.5l2-2 4 4-2 2z" fill="#f4f4f4" stroke="none" stroke-width="1" />
<path d="M1232 90h15l8 8v25h-23z" fill="#7cc4f0" stroke="none" stroke-width="1" />
<path d="M1247 90v8h8z" fill="#b9e0f8" stroke="none" stroke-width="1" />
<rect x="1214" y="106" width="27" height="19" fill="#4a5260" stroke="#b8bcc2" stroke-width="1.3"/>
<circle cx="1241" cy="123" r="8.5" fill="#5a626f" stroke="#b8bcc2" stroke-width="1.3"/>
<rect x="1212.5" y="123.5" width="3" height="3" fill="#e8e8e8" />
<text x="1207" y="155.8" font-size="16.3" fill="#e2e5ea" textLength="52" lengthAdjust="spacingAndGlyphs" >Insertar</text>
<path d="M1229.5 164.0h7l-3.5 4z" fill="#d8dce2"/>
<rect x="1269" y="104" width="11" height="8" fill="#5a626f" stroke="#b8bcc2" stroke-width="1.1"/>
<circle cx="1281" cy="111" r="3.4" fill="#5a626f" stroke="#b8bcc2" stroke-width="1.1"/>
<g transform="translate(1283,100) scale(0.5)"><circle r="6" fill="#ffcf4d"/><line x1="0" y1="-7.5" x2="0" y2="-10.5" transform="rotate(0)" stroke="#ffcf4d" stroke-width="1.8"/><line x1="0" y1="-7.5" x2="0" y2="-10.5" transform="rotate(45)" stroke="#ffcf4d" stroke-width="1.8"/><line x1="0" y1="-7.5" x2="0" y2="-10.5" transform="rotate(90)" stroke="#ffcf4d" stroke-width="1.8"/><line x1="0" y1="-7.5" x2="0" y2="-10.5" transform="rotate(135)" stroke="#ffcf4d" stroke-width="1.8"/><line x1="0" y1="-7.5" x2="0" y2="-10.5" transform="rotate(180)" stroke="#ffcf4d" stroke-width="1.8"/><line x1="0" y1="-7.5" x2="0" y2="-10.5" transform="rotate(225)" stroke="#ffcf4d" stroke-width="1.8"/><line x1="0" y1="-7.5" x2="0" y2="-10.5" transform="rotate(270)" stroke="#ffcf4d" stroke-width="1.8"/><line x1="0" y1="-7.5" x2="0" y2="-10.5" transform="rotate(315)" stroke="#ffcf4d" stroke-width="1.8"/></g>
<rect x="1269" y="137" width="11" height="8" fill="#5a626f" stroke="#b8bcc2" stroke-width="1.1"/>
<circle cx="1281" cy="144" r="3.4" fill="#5a626f" stroke="#b8bcc2" stroke-width="1.1"/>
<path d="M1278 138l7-8 2.5 2.5-7 8z" fill="#f2c06a" stroke="none" stroke-width="1" />
<path d="M1285 130l1.5-1.5 2.5 2.5-1.5 1.5z" fill="#d9534f" stroke="none" stroke-width="1" />
<path d="M1267 163h9l9 9-7 9-11-9z" fill="#d9d9d6" stroke="none" stroke-width="1" />
<path d="M1278 173l7-8 2.5 2.5-7 8z" fill="#f2c06a" stroke="none" stroke-width="1" />
<path d="M1285 165l1.5-1.5 2.5 2.5-1.5 1.5z" fill="#d9534f" stroke="none" stroke-width="1" />
<path d="M1270 170l6 7" fill="none" stroke="#555" stroke-width="1" stroke-dasharray="2 1.5"/>
<path d="M1298.5 169.0h7l-3.5 4z" fill="#d8dce2"/>
<rect x="1346" y="93" width="28" height="37" fill="#e4e4e4" rx="1.5"/>
<rect x="1350" y="97" width="20" height="13" fill="#6db8ea" />
<path d="M1351 116h9M1351 122h14" fill="none" stroke="#666" stroke-width="1.2" />
<rect x="1354" y="114" width="2" height="4" fill="#666" />
<rect x="1362" y="120" width="2" height="4" fill="#666" />
<path d="M1366 124l12-10 8 9-10 11z" fill="#f2c96b" stroke="none" stroke-width="1" />
<path d="M1378 114l4-4 3 1 2-3 4 4-3 2 1 3-3 5z" fill="#f4f4f4" stroke="none" stroke-width="1" />
<text x="1342" y="157.5" font-size="16.3" fill="#e2e5ea" textLength="48" lengthAdjust="spacingAndGlyphs" >Igualar</text>
<text x="1322" y="178.1" font-size="16.3" fill="#e2e5ea" textLength="89" lengthAdjust="spacingAndGlyphs" >propiedades</text>
<path d="M1428.5 106L1428.50 95.00A11 11 0 0 1 1436.28 98.22z" fill="#e74c3c" stroke="none" stroke-width="1" />
<path d="M1428.5 106L1436.28 98.22A11 11 0 0 1 1439.50 106.00z" fill="#f39c12" stroke="none" stroke-width="1" />
<path d="M1428.5 106L1439.50 106.00A11 11 0 0 1 1436.28 113.78z" fill="#f1c40f" stroke="none" stroke-width="1" />
<path d="M1428.5 106L1436.28 113.78A11 11 0 0 1 1428.50 117.00z" fill="#2ecc71" stroke="none" stroke-width="1" />
<path d="M1428.5 106L1428.50 117.00A11 11 0 0 1 1420.72 113.78z" fill="#1abc9c" stroke="none" stroke-width="1" />
<path d="M1428.5 106L1420.72 113.78A11 11 0 0 1 1417.50 106.00z" fill="#3498db" stroke="none" stroke-width="1" />
<path d="M1428.5 106L1417.50 106.00A11 11 0 0 1 1420.72 98.22z" fill="#8e44ad" stroke="none" stroke-width="1" />
<path d="M1428.5 106L1420.72 98.22A11 11 0 0 1 1428.50 95.00z" fill="#e84393" stroke="none" stroke-width="1" />
<rect x="1444" y="93" width="181" height="27" fill="#4a5364" />
<rect x="1444" y="93" width="181" height="1" fill="#586274" />
<rect x="1444" y="125" width="181" height="27" fill="#4a5364" />
<rect x="1444" y="125" width="181" height="1" fill="#586274" />
<rect x="1444" y="157" width="181" height="27" fill="#4a5364" />
<rect x="1444" y="157" width="181" height="1" fill="#586274" />
<rect x="1459" y="96" width="21" height="21" fill="#a3a5a2" />
<text x="1493" y="112.3" font-size="16.3" fill="#e2e5ea" textLength="58" lengthAdjust="spacingAndGlyphs" >PorCapa</text>
<line x1="1448" y1="138.5" x2="1533" y2="138.5" stroke="#e4e7ec" stroke-width="1.2" />
<text x="1536" y="144.0" font-size="16.3" fill="#e2e5ea" textLength="58" lengthAdjust="spacingAndGlyphs" >PorCapa</text>
<line x1="1448" y1="170.5" x2="1533" y2="170.5" stroke="#e4e7ec" stroke-width="1.2" />
<text x="1536" y="176.0" font-size="16.3" fill="#e2e5ea" textLength="58" lengthAdjust="spacingAndGlyphs" >PorCapa</text>
<path d="M1612.5 102.5h9l-4.5 5z" fill="#d8dce2"/>
<path d="M1612.5 135.5h9l-4.5 5z" fill="#d8dce2"/>
<path d="M1612.5 168.5h9l-4.5 5z" fill="#d8dce2"/>
<rect x="1418" y="127" width="21" height="1.5" fill="#e4e4e4" />
<rect x="1418" y="133" width="21" height="2.5" fill="#e4e4e4" />
<rect x="1418" y="139" width="21" height="3.5" fill="#e4e4e4" />
<rect x="1418" y="145" width="21" height="4" fill="#e4e4e4" />
<line x1="1418" y1="161.0" x2="1439" y2="161.0" stroke="#d0d0d0" stroke-width="1.2" stroke-dasharray="21"/>
<line x1="1418" y1="165.5" x2="1439" y2="165.5" stroke="#d0d0d0" stroke-width="1.2" stroke-dasharray="3 1.5"/>
<line x1="1418" y1="170.0" x2="1439" y2="170.0" stroke="#d0d0d0" stroke-width="1.2" stroke-dasharray="6 2"/>
<line x1="1418" y1="174.5" x2="1439" y2="174.5" stroke="#d0d0d0" stroke-width="1.2" stroke-dasharray="2 2"/>
<line x1="1418" y1="179.0" x2="1439" y2="179.0" stroke="#d0d0d0" stroke-width="1.2" stroke-dasharray="21"/>
<path d="M1640 100h-3v33h3M1662 100h3v33h-3" fill="none" stroke="#bfc4ca" stroke-width="1.3" />
<rect x="1646" y="104" width="10" height="8" fill="#5a9bd0" />
<circle cx="1652" cy="124" r="6.5" fill="#7a808a" stroke="#b8bcc2"/>
<g transform="translate(1667,103) scale(0.85)"><circle r="6" fill="#ffd766"/><line x1="0" y1="-7.5" x2="0" y2="-10.5" transform="rotate(0)" stroke="#ffd766" stroke-width="1.8"/><line x1="0" y1="-7.5" x2="0" y2="-10.5" transform="rotate(45)" stroke="#ffd766" stroke-width="1.8"/><line x1="0" y1="-7.5" x2="0" y2="-10.5" transform="rotate(90)" stroke="#ffd766" stroke-width="1.8"/><line x1="0" y1="-7.5" x2="0" y2="-10.5" transform="rotate(135)" stroke="#ffd766" stroke-width="1.8"/><line x1="0" y1="-7.5" x2="0" y2="-10.5" transform="rotate(180)" stroke="#ffd766" stroke-width="1.8"/><line x1="0" y1="-7.5" x2="0" y2="-10.5" transform="rotate(225)" stroke="#ffd766" stroke-width="1.8"/><line x1="0" y1="-7.5" x2="0" y2="-10.5" transform="rotate(270)" stroke="#ffd766" stroke-width="1.8"/><line x1="0" y1="-7.5" x2="0" y2="-10.5" transform="rotate(315)" stroke="#ffd766" stroke-width="1.8"/></g>
<text x="1635" y="156" font-size="16.3" fill="#e2e5ea" textLength="43" lengthAdjust="spacingAndGlyphs" >Grupo</text>
<path d="M1693 96h-2v15h2M1705 96h2v15h-2" fill="none" stroke="#bfc4ca" stroke-width="1.1" />
<rect x="1694" y="98" width="6" height="5" fill="#5a9bd0" />
<circle cx="1698" cy="108" r="3" fill="#7a808a"/>
<path d="M1704 103l6 6M1710 103l-6 6" fill="none" stroke="#e05a5a" stroke-width="1.6" />
<path d="M1693 129h-2v15h2M1701 129h2v15h-2" fill="none" stroke="#bfc4ca" stroke-width="1.1" />
<rect x="1694" y="131" width="5" height="5" fill="#5a9bd0" />
<path d="M1701 146l7-8 2.5 2.5-7 8z" fill="#f2c06a" stroke="none" stroke-width="1" />
<rect x="1686" y="158" width="25" height="26" fill="#3f5c78" stroke="#6db8ea" stroke-width="1.2"/>
<rect x="1694" y="163" width="7" height="6" fill="#6bc06b" />
<circle cx="1697.5" cy="175" r="3.5" fill="#6bc06b"/>
<path d="M1702 170v11l3-2.5 2 4 1.6-.8-2-4h4z" fill="#f4f4f4" stroke="none" stroke-width="1" />
<path d="M1741 95v30" fill="none" stroke="#bfc4ca" stroke-width="1.3" />
<path d="M1746 98q22 2 24 24" fill="none" stroke="#bfc4ca" stroke-width="1.3" />
<path d="M1743 98l6-3v6zM1770 124l-3-6h6z" fill="#bfc4ca" stroke="none" stroke-width="1" />
<rect x="1737" y="127" width="40" height="9" fill="#f1cf5b" />
<path d="M1741 127v4M1746 127v3M1751 127v4M1756 127v3M1761 127v4M1766 127v3M1771 127v4" fill="none" stroke="#8a6d1c" stroke-width="1" />
<text x="1738" y="156.5" font-size="16.3" fill="#e2e5ea" textLength="41" lengthAdjust="spacingAndGlyphs" >Medir</text>
<path d="M1754.5 166.0h7l-3.5 4z" fill="#d8dce2"/>
<rect x="1806" y="102" width="14" height="14" fill="#e8f0f8" />
<path d="M1809 106h8M1809 109h8M1809 112h8" fill="none" stroke="#5a9bd0" stroke-width="1.2" />
<path d="M1798 101v12l3-3 2 4 1.6-.8-2-4h4z" fill="#f4f4f4" stroke="none" stroke-width="1" />
<path d="M1805 95l-3 5h3l-1 4 4-6h-3z" fill="#f1c84b" stroke="none" stroke-width="1" />
<rect x="1799" y="129" width="19" height="18" fill="#4c9a4c" stroke="#8fd18f" stroke-width="1" stroke-dasharray="2 1.5"/>
<path d="M1802 143v-7h4v7M1808 143v-10h4v10" fill="none" stroke="#c8f0c8" stroke-width="1" />
<path d="M1812 138v11l3-2.5 2 4 1.6-.8-2-4h4z" fill="#f4f4f4" stroke="none" stroke-width="1" />
<rect x="1801" y="161" width="15" height="21" fill="#d8d8d4" rx="1"/>
<rect x="1803" y="163" width="11" height="4" fill="#8a8a86" />
<rect x="1803" y="169.5" width="2.6" height="2.6" fill="#6a6a66" />
<rect x="1807" y="169.5" width="2.6" height="2.6" fill="#6a6a66" />
<rect x="1811" y="169.5" width="2.6" height="2.6" fill="#6a6a66" />
<rect x="1803" y="173.5" width="2.6" height="2.6" fill="#6a6a66" />
<rect x="1807" y="173.5" width="2.6" height="2.6" fill="#6a6a66" />
<rect x="1811" y="173.5" width="2.6" height="2.6" fill="#6a6a66" />
<rect x="1803" y="177.5" width="2.6" height="2.6" fill="#6a6a66" />
<rect x="1807" y="177.5" width="2.6" height="2.6" fill="#6a6a66" />
<rect x="1811" y="177.5" width="2.6" height="2.6" fill="#6a6a66" />
<rect x="1849" y="98" width="29" height="33" fill="#eab676" rx="1.5"/>
<rect x="1858" y="94" width="11" height="6" fill="#e8e8e8" rx="1"/>
<path d="M1859 105h16l9 9v22h-25z" fill="#ececec" stroke="none" stroke-width="1" />
<path d="M1875 105v9h9z" fill="#bdbdbd" stroke="none" stroke-width="1" />
<text x="1847" y="157.6" font-size="16.3" fill="#e2e5ea" textLength="40" lengthAdjust="spacingAndGlyphs" >Pegar</text>
<path d="M1862.5 167.0h7l-3.5 4z" fill="#d8dce2"/>
<rect x="1906" y="96" width="15" height="18" fill="#e0e0e0" />
<path d="M1908 100h9M1908 103h9M1908 106h6" fill="none" stroke="#666" stroke-width="1" />
<path d="M1915 104l9 10M1924 104l-8 10" fill="none" stroke="#f0f0f0" stroke-width="1.5" />
<circle cx="1915" cy="115" r="1.8" fill="none" stroke="#f0f0f0" stroke-width="1.1"/><circle cx="1925" cy="115" r="1.8" fill="none" stroke="#f0f0f0" stroke-width="1.1"/>
<path d="M1908 129h8l3 3v13h-11z" fill="#c4c4c4" stroke="none" stroke-width="1" />
<path d="M1912 133h8l4 4v13h-12z" fill="#ececec" stroke="none" stroke-width="1" />
<path d="M1958 98h18v13h24v19h-42z" fill="#e4e4e2" stroke="none" stroke-width="1" />
<text x="1963" y="157.1" font-size="16.3" fill="#e2e5ea" textLength="33" lengthAdjust="spacingAndGlyphs" >Base</text>
<path d="M1975.5 166.0h7l-3.5 4z" fill="#d8dce2"/>
<!-- p_drawing -->
<defs>
<pattern id="wh" width="7.8" height="7.8" patternUnits="userSpaceOnUse" patternTransform="rotate(-46)"><rect width="7.8" height="1.05" fill="#767d85"/></pattern>
<linearGradient id="gb" x1="0" y1="0" x2="1" y2="0"><stop offset="0" stop-color="#2f7dc1"/><stop offset="0.5" stop-color="#70afdb"/><stop offset="1" stop-color="#addef5"/></linearGradient>
<clipPath id="vp"><rect x="0" y="256" width="2048" height="772.5"/></clipPath>
</defs>
<g clip-path="url(#vp)">
<path d="M206.8 278.8H553V316H225.5V972H1071V1040H1052V990.6H206.8Z" fill="url(#wh)" stroke="#cfd2d6" stroke-width="1.5" />
<path d="M1073 278.8H1329.3V1040H1310.5V686.5H1158.5V668.5H1310.5V316H1073Z" fill="url(#wh)" stroke="#cfd2d6" stroke-width="1.5" />
<path d="M1164.2 316H1168.8V495H1163.5V668.5H1158.5V490H1164.2Z" fill="url(#wh)" stroke="#cfd2d6" stroke-width="1.5" />
<path d="M553 316V273.3H1073V316" fill="none" stroke="#a3a7ab" stroke-width="1.3" />
<path d="M554 303H1072M565 309.7H799.5M825.5 309.7H1060.5" fill="none" stroke="#2c6aa6" stroke-width="1.2" />
<line x1="553" y1="316.2" x2="1073" y2="316.2" stroke="#a3a7ab" stroke-width="1.2" />
<path d="M565 303V316M799.5 303V316M813 303V316M825.5 303V316M1060.5 303V316" fill="none" stroke="#2c6aa6" stroke-width="1.2" />
<path d="M505 341H591V466.5H1025V341H1071V946.5H596V475H505Z" fill="#b0e2a8" stroke="none" stroke-width="1" />
<clipPath id="gc"><path d="M505 341H591V466.5H1025V341H1071V946.5H596V475H505Z"/></clipPath>
<g clip-path="url(#gc)">
<line x1="515.8" y1="340" x2="515.8" y2="947" stroke="#3f8f4c" stroke-width="1.15" />
<line x1="541.0" y1="340" x2="541.0" y2="947" stroke="#3f8f4c" stroke-width="1.15" />
<line x1="566.2" y1="340" x2="566.2" y2="947" stroke="#3f8f4c" stroke-width="1.15" />
<line x1="591.4" y1="340" x2="591.4" y2="947" stroke="#3f8f4c" stroke-width="1.15" />
<line x1="616.6" y1="340" x2="616.6" y2="947" stroke="#3f8f4c" stroke-width="1.15" />
<line x1="641.8" y1="340" x2="641.8" y2="947" stroke="#3f8f4c" stroke-width="1.15" />
<line x1="667.0" y1="340" x2="667.0" y2="947" stroke="#3f8f4c" stroke-width="1.15" />
<line x1="692.2" y1="340" x2="692.2" y2="947" stroke="#3f8f4c" stroke-width="1.15" />
<line x1="717.4" y1="340" x2="717.4" y2="947" stroke="#3f8f4c" stroke-width="1.15" />
<line x1="742.6" y1="340" x2="742.6" y2="947" stroke="#3f8f4c" stroke-width="1.15" />
<line x1="767.8" y1="340" x2="767.8" y2="947" stroke="#3f8f4c" stroke-width="1.15" />
<line x1="793.0" y1="340" x2="793.0" y2="947" stroke="#3f8f4c" stroke-width="1.15" />
<line x1="818.2" y1="340" x2="818.2" y2="947" stroke="#3f8f4c" stroke-width="1.15" />
<line x1="843.4" y1="340" x2="843.4" y2="947" stroke="#3f8f4c" stroke-width="1.15" />
<line x1="868.6" y1="340" x2="868.6" y2="947" stroke="#3f8f4c" stroke-width="1.15" />
<line x1="893.8" y1="340" x2="893.8" y2="947" stroke="#3f8f4c" stroke-width="1.15" />
<line x1="919.0" y1="340" x2="919.0" y2="947" stroke="#3f8f4c" stroke-width="1.15" />
<line x1="944.2" y1="340" x2="944.2" y2="947" stroke="#3f8f4c" stroke-width="1.15" />
<line x1="969.4" y1="340" x2="969.4" y2="947" stroke="#3f8f4c" stroke-width="1.15" />
<line x1="994.6" y1="340" x2="994.6" y2="947" stroke="#3f8f4c" stroke-width="1.15" />
<line x1="1019.8" y1="340" x2="1019.8" y2="947" stroke="#3f8f4c" stroke-width="1.15" />
<line x1="1045.0" y1="340" x2="1045.0" y2="947" stroke="#3f8f4c" stroke-width="1.15" />
</g>
<path d="M591 316H1025V467H591Z" fill="none" stroke="#a3a7ab" stroke-width="1.2" />
<line x1="591" y1="342" x2="1025" y2="342" stroke="#a3a7ab" stroke-width="1.2" />
<rect x="591.6" y="342.6" width="432.8" height="123.4" fill="#212830" />
<rect x="225.5" y="316" width="255.5" height="145" fill="#d6b28e" />
<clipPath id="wc"><rect x="226" y="317" width="254.5" height="143.5"/></clipPath><g clip-path="url(#wc)">
<line x1="229" y1="324.5" x2="481" y2="324.5" stroke="#c39a76" stroke-width="1.2" stroke-dasharray="34 6 22 8 40 5" stroke-dashoffset="0"/>
<line x1="229" y1="332.0" x2="481" y2="332.0" stroke="#c39a76" stroke-width="1.2" stroke-dasharray="20 7 38 6 26 9" stroke-dashoffset="17"/>
<line x1="229" y1="339.5" x2="481" y2="339.5" stroke="#c39a76" stroke-width="1.2" stroke-dasharray="44 5 18 8 30 7" stroke-dashoffset="34"/>
<line x1="229" y1="347.0" x2="481" y2="347.0" stroke="#c39a76" stroke-width="1.2" stroke-dasharray="28 8 36 6 22 6" stroke-dashoffset="1"/>
<line x1="229" y1="354.5" x2="481" y2="354.5" stroke="#c39a76" stroke-width="1.2" stroke-dasharray="34 6 22 8 40 5" stroke-dashoffset="18"/>
<line x1="229" y1="362.0" x2="481" y2="362.0" stroke="#c39a76" stroke-width="1.2" stroke-dasharray="20 7 38 6 26 9" stroke-dashoffset="35"/>
<line x1="229" y1="369.5" x2="481" y2="369.5" stroke="#c39a76" stroke-width="1.2" stroke-dasharray="44 5 18 8 30 7" stroke-dashoffset="2"/>
<line x1="229" y1="377.0" x2="481" y2="377.0" stroke="#c39a76" stroke-width="1.2" stroke-dasharray="28 8 36 6 22 6" stroke-dashoffset="19"/>
<line x1="229" y1="384.5" x2="481" y2="384.5" stroke="#c39a76" stroke-width="1.2" stroke-dasharray="34 6 22 8 40 5" stroke-dashoffset="36"/>
<line x1="229" y1="392.0" x2="481" y2="392.0" stroke="#c39a76" stroke-width="1.2" stroke-dasharray="20 7 38 6 26 9" stroke-dashoffset="3"/>
<line x1="229" y1="399.5" x2="481" y2="399.5" stroke="#c39a76" stroke-width="1.2" stroke-dasharray="44 5 18 8 30 7" stroke-dashoffset="20"/>
<line x1="229" y1="407.0" x2="481" y2="407.0" stroke="#c39a76" stroke-width="1.2" stroke-dasharray="28 8 36 6 22 6" stroke-dashoffset="37"/>
<line x1="229" y1="414.5" x2="481" y2="414.5" stroke="#c39a76" stroke-width="1.2" stroke-dasharray="34 6 22 8 40 5" stroke-dashoffset="4"/>
<line x1="229" y1="422.0" x2="481" y2="422.0" stroke="#c39a76" stroke-width="1.2" stroke-dasharray="20 7 38 6 26 9" stroke-dashoffset="21"/>
<line x1="229" y1="429.5" x2="481" y2="429.5" stroke="#c39a76" stroke-width="1.2" stroke-dasharray="44 5 18 8 30 7" stroke-dashoffset="38"/>
<line x1="229" y1="437.0" x2="481" y2="437.0" stroke="#c39a76" stroke-width="1.2" stroke-dasharray="28 8 36 6 22 6" stroke-dashoffset="5"/>
<line x1="229" y1="444.5" x2="481" y2="444.5" stroke="#c39a76" stroke-width="1.2" stroke-dasharray="34 6 22 8 40 5" stroke-dashoffset="22"/>
<line x1="229" y1="452.0" x2="481" y2="452.0" stroke="#c39a76" stroke-width="1.2" stroke-dasharray="20 7 38 6 26 9" stroke-dashoffset="39"/>
</g>
<path d="M225.5 316H481V461H225.5Z" fill="none" stroke="#e9d3bd" stroke-width="1" />
<circle cx="291.3" cy="391.7" r="45" fill="#212830"/><circle cx="291.3" cy="391.7" r="14" fill="none" stroke="#a3a7ab" stroke-width="1.2"/>
<path d="M225.5 472.7H480.5V461" fill="none" stroke="#a4a9ae" stroke-width="1.1" />
<path d="M231.5 472.5V960M238.3 472.5V960M467.5 472.5V960" fill="none" stroke="#9a9fa5" stroke-width="1" />
<path d="M474.5 472.5V960" fill="none" stroke="#c9ccd0" stroke-width="1" />
<path d="M225.5 960H480V971.5H225.5Z" fill="none" stroke="#cfd2d6" stroke-width="1.3" />
<path d="M256.5 477.5H450V545.5H256.5Z" fill="none" stroke="#a3a7ab" stroke-width="1.2" />
<path d="M243 625L322.5 671L463 556V954H243Z" fill="url(#gb)" stroke="#b8c4cc" stroke-width="1" />
<path d="M243 625L463 556" fill="none" stroke="#a3a7ab" stroke-width="1.1" />
<rect x="474.6" y="486.8" width="114.9" height="457.5" fill="url(#gb)" />
<path d="M474.6 486.8H589.5V944.3H474.6Z" fill="none" stroke="#b8c4cc" stroke-width="1" />
<rect x="589.5" y="487" width="6.5" height="458" fill="#212830" />
<path d="M474.6 475.5H600.2V486.8H474.6Z" fill="#212830" stroke="#5e646c" stroke-width="1" />
<line x1="505.3" y1="476" x2="505.3" y2="487" stroke="#8e939a" stroke-width="1" />
<path d="M474.6 945H601.5V956.5H474.6Z" fill="#212830" stroke="#8e939a" stroke-width="1" />
<line x1="505" y1="945.5" x2="601" y2="945.5" stroke="#a9adb2" stroke-width="1" />
<path d="M877 466H990V511q0 7.5-7.5 7.5H884.5q-7.5 0-7.5-7.5Z" fill="#5d5d5d" stroke="none" stroke-width="1" />
<line x1="877" y1="506" x2="990" y2="506" stroke="#8b8b8b" stroke-width="1" />
<path d="M877 466V511q0 7.5 7.5 7.5H982.5q7.5 0 7.5-7.5V466" fill="none" stroke="#8d9196" stroke-width="1" />
<path d="M648.5 466H762.5V511q0 7.5-7.5 7.5H656.0q-7.5 0-7.5-7.5Z" fill="#5d5d5d" stroke="none" stroke-width="1" />
<line x1="650" y1="506" x2="761" y2="506" stroke="#8b8b8b" stroke-width="1" />
<path d="M648.5 466H762.5V511q0 7.5-7.5 7.5H656q-7.5 0-7.5-7.5Z" fill="none" stroke="#5b8fe0" stroke-width="2.2" />
<path d="M648.5 472V506" fill="none" stroke="#1f8ff4" stroke-width="3" stroke-dasharray="7 4"/>
<path d="M762.5 472V506" fill="none" stroke="#1f8ff4" stroke-width="3" stroke-dasharray="7 4"/>
<rect x="642" y="460" width="13.5" height="12.5" fill="#1f8ff4" />
<rect x="642" y="505" width="13.5" height="12" fill="#1f8ff4" />
<rect x="649.5" y="513" width="13.5" height="11.5" fill="#1f8ff4" />
<rect x="747.5" y="513" width="13.5" height="11.5" fill="#1f8ff4" />
<rect x="755" y="505" width="13.5" height="12" fill="#1f8ff4" />
<rect x="695" y="517" width="20.5" height="3.6" fill="#1f8ff4" />
<path d="M648.7 432V514M761.5 432V514" fill="none" stroke="#aeb2b6" stroke-width="1" />
<line x1="601.4" y1="431.8" x2="807.7" y2="431.8" stroke="#f4f4f4" stroke-width="1.3" />
<line x1="704.3" y1="329" x2="704.3" y2="535" stroke="#f4f4f4" stroke-width="1.3" />
<line x1="705.6" y1="434" x2="705.6" y2="464" stroke="#f3e6a0" stroke-width="1.2" stroke-dasharray="6 9"/>
<rect x="695" y="463.6" width="20.5" height="6.4" fill="#c6111d" />
<rect x="721" y="450.8" width="162.5" height="26.4" fill="#b9bbb8" stroke="#15181c" stroke-width="1.6"/>
<text x="727.5" y="468.8" font-size="16.3" fill="#17191c" textLength="145" lengthAdjust="spacingAndGlyphs" >Orto: 136.3597 &lt; 90°</text>
<line x1="1234.5" y1="316" x2="1234.5" y2="668.5" stroke="#a3a7ab" stroke-width="1.1" />
<polyline points="1177.8,333.5 1291.4,338.0 1177.8,346.9 1291.4,357.9" fill="none" stroke="#a3a7ab" stroke-width="1.2"/>
<polyline points="1291.4,360.8 1177.8,385.0 1291.4,386.9 1177.8,398.0 1291.4,412.5" fill="none" stroke="#a3a7ab" stroke-width="1.2"/>
<polyline points="1177.8,415.1 1291.4,419.6 1177.8,428.5 1291.4,439.5" fill="none" stroke="#a3a7ab" stroke-width="1.2"/>
<polyline points="1291.4,442.4 1177.8,466.6 1291.4,468.5 1177.8,479.6 1291.4,494.1" fill="none" stroke="#a3a7ab" stroke-width="1.2"/>
<polyline points="1177.8,496.7 1291.4,501.2 1177.8,510.1 1291.4,521.1" fill="none" stroke="#a3a7ab" stroke-width="1.2"/>
<polyline points="1291.4,524.0 1177.8,548.2 1291.4,550.1 1177.8,561.2 1291.4,575.7" fill="none" stroke="#a3a7ab" stroke-width="1.2"/>
<polyline points="1177.8,578.3 1291.4,582.8 1177.8,591.7 1291.4,602.7" fill="none" stroke="#a3a7ab" stroke-width="1.2"/>
<polyline points="1291.4,605.6 1177.8,629.8 1291.4,631.7 1177.8,642.8 1291.4,657.3" fill="none" stroke="#a3a7ab" stroke-width="1.2"/>
<text x="3" y="277.5" font-size="15.5" fill="#e9eaec" textLength="20.5" lengthAdjust="spacingAndGlyphs" >[−]</text>
<text x="26" y="277.5" font-size="15.5" fill="#e9eaec" textLength="68" lengthAdjust="spacingAndGlyphs" >[Superior]</text>
<text x="95.5" y="277.5" font-size="15.5" fill="#e9eaec" textLength="174.5" lengthAdjust="spacingAndGlyphs" >[Estructura alámbrica 2D]</text>
<path d="M19.5 999V939.5M26 1005.5H86" fill="none" stroke="#dcdde0" stroke-width="1.3" />
<path d="M13.5 999.5H25.5V1011.5H13.5Z" fill="none" stroke="#dcdde0" stroke-width="1.3" />
<path d="M21 919.5L29.5 928L38 919.5M29.5 928V936" fill="none" stroke="#dcdde0" stroke-width="1.3" />
<path d="M90 989L107 1005M107 989L90 1005" fill="none" stroke="#dcdde0" stroke-width="1.3" />
</g>
<!-- p_bottom -->
<rect x="0" y="1027.5" width="2048" height="4" fill="#2c343f" />
<rect x="0" y="1031" width="2048" height="121" fill="#20282f" />
<rect x="32" y="1031" width="2016" height="55" fill="#c9cac7" />
<rect x="32" y="1085.5" width="2016" height="1.5" fill="#5d5f60" />
<rect x="32" y="1087" width="2016" height="25.5" fill="#fdfdfc" />
<text x="35" y="1058.4" font-size="15.7" fill="#111" textLength="75.5" lengthAdjust="spacingAndGlyphs" font-family="'Liberation Mono', monospace" >Comando:</text>
<text x="35" y="1078.8" font-size="15.7" fill="#111" textLength="124" lengthAdjust="spacingAndGlyphs" font-family="'Liberation Mono', monospace" >** ESTIRAR **</text>
<text x="72.5" y="1105.2" font-size="15.9" fill="#111" textLength="286.5" lengthAdjust="spacingAndGlyphs" font-family="'Liberation Mono', monospace" >Precise punto de estiramiento:</text>
<rect x="36.5" y="1091.5" width="21" height="15" fill="#f4f4f4" stroke="#6a6a6a" stroke-width="1.2"/>
<rect x="36.5" y="1091.5" width="21" height="3.5" fill="#7a7a7a" />
<path d="M40 1098l3 2-3 2M45 1103h5" fill="none" stroke="#555" stroke-width="1.1" />
<path d="M61.5 1096.75h8l-4.0 4.5z" fill="#555"/>
<rect x="3.5" y="1036.5" width="2" height="2" fill="#e0e0e0" />
<rect x="7.5" y="1036.5" width="2" height="2" fill="#e0e0e0" />
<rect x="11.5" y="1036.5" width="2" height="2" fill="#e0e0e0" />
<rect x="15.5" y="1036.5" width="2" height="2" fill="#e0e0e0" />
<rect x="19.5" y="1036.5" width="2" height="2" fill="#e0e0e0" />
<rect x="23.5" y="1036.5" width="2" height="2" fill="#e0e0e0" />
<rect x="3.5" y="1040.5" width="2" height="2" fill="#e0e0e0" />
<rect x="7.5" y="1040.5" width="2" height="2" fill="#e0e0e0" />
<rect x="11.5" y="1040.5" width="2" height="2" fill="#e0e0e0" />
<rect x="15.5" y="1040.5" width="2" height="2" fill="#e0e0e0" />
<rect x="19.5" y="1040.5" width="2" height="2" fill="#e0e0e0" />
<rect x="23.5" y="1040.5" width="2" height="2" fill="#e0e0e0" />
<path d="M8 1054l10 10M18 1054l-10 10" fill="none" stroke="#e8e8e8" stroke-width="2.2" />
<path d="M4 1098l10-10q-2-6 4-8l-2 4 3 3 4-2q-1 6-7 5l-10 10z" fill="#e8e8e8" stroke="none" stroke-width="1" />
<path d="M15 1115h88l-7 20q-2 5-7 5H31q-5 0-7-5z" fill="#3b4552" stroke="none" stroke-width="1" />
<path d="M105 1115h128l-7 20q-2 5-7 5H120q-5 0-7-5z" fill="#2a323d" stroke="none" stroke-width="1" />
<path d="M234 1115h128l-7 20q-2 5-7 5H249q-5 0-7-5z" fill="#2a323d" stroke="none" stroke-width="1" />
<path d="M364 1115h33l-7 20q-2 5-7 5h-5q-5 0-7-5z" fill="#2a323d" stroke="none" stroke-width="1" />
<text x="31" y="1132.3" font-size="16.3" fill="#ffffff" textLength="56" lengthAdjust="spacingAndGlyphs" font-weight="bold" >Modelo</text>
<text x="118" y="1132.3" font-size="16.3" fill="#c4cad2" textLength="98" lengthAdjust="spacingAndGlyphs" >Presentación1</text>
<text x="247" y="1132.3" font-size="16.3" fill="#c4cad2" textLength="98" lengthAdjust="spacingAndGlyphs" >Presentación2</text>
<path d="M376 1127.5h10M381 1122.5v10" fill="none" stroke="#c8ccd2" stroke-width="2" />
<rect x="1218.5" y="1116" width="74.5" height="32" fill="#343d48" />
<text x="1224" y="1139.3" font-size="16" fill="#f0f2f4" textLength="65" lengthAdjust="spacingAndGlyphs" >MODELO</text>
<rect x="1296" y="1116" width="82" height="32" fill="#343d48" />
<path d="M1302.5 1127h18M1302.5 1132h18M1302.5 1137h18M1306.5 1123v18M1311.5 1123v18M1316.5 1123v18" fill="none" stroke="#e6e8eb" stroke-width="1.2" />
<rect x="1329.5" y="1117.5" width="30" height="29" fill="#5b96cc" />
<rect x="1336.5" y="1124" width="3" height="3" fill="#fff" />
<rect x="1342.5" y="1124" width="3" height="3" fill="#fff" />
<rect x="1348.5" y="1124" width="3" height="3" fill="#fff" />
<rect x="1336.5" y="1130" width="3" height="3" fill="#fff" />
<rect x="1342.5" y="1130" width="3" height="3" fill="#fff" />
<rect x="1348.5" y="1130" width="3" height="3" fill="#fff" />
<rect x="1336.5" y="1136" width="3" height="3" fill="#fff" />
<rect x="1342.5" y="1136" width="3" height="3" fill="#fff" />
<rect x="1348.5" y="1136" width="3" height="3" fill="#fff" />
<path d="M1366.5 1130.25h8l-4.0 4.5z" fill="#e6e8eb"/>
<rect x="1381" y="1116" width="223" height="32" fill="#343d48" />
<rect x="1385" y="1117.5" width="30" height="29" fill="#5b96cc" />
<path d="M1390 1123v18h19" fill="none" stroke="#fff" stroke-width="1.8" />
<path d="M1390 1134h6v7" fill="none" stroke="#fff" stroke-width="1.2" />
<circle cx="1431" cy="1133" r="7.5" fill="none" stroke="#aab0b8" stroke-width="1.3"/>
<path d="M1431 1133h12M1431 1133l8-9" fill="none" stroke="#aab0b8" stroke-width="1.3" />
<path d="M1454.0 1130.25h8l-4.0 4.5z" fill="#e6e8eb"/>
<path d="M1484.5 1122v20" fill="none" stroke="#6bc06b" stroke-width="1.4" />
<path d="M1477 1124l14 16" fill="none" stroke="#d05a5a" stroke-width="1.3" />
<path d="M1478 1139l10-8" fill="none" stroke="#aab0b8" stroke-width="1.2" />
<rect x="1483" y="1129.5" width="3" height="3" fill="#e0e0e0" />
<path d="M1506.5 1130.25h8l-4.0 4.5z" fill="#e6e8eb"/>
<rect x="1523" y="1117.5" width="30" height="29" fill="#5b96cc" />
<path d="M1527 1141h22" fill="none" stroke="#fff" stroke-width="1.6" />
<path d="M1530 1139l15-14" fill="none" stroke="#fff" stroke-width="1.6" />
<rect x="1528" y="1137" width="4" height="4" fill="#fff" />
<rect x="1555" y="1117.5" width="30" height="29" fill="#5b96cc" />
<path d="M1563 1125h16v16h-16z" fill="none" stroke="#fff" stroke-width="1.6" />
<rect x="1559.5" y="1121.5" width="6" height="6" fill="#5b96cc" stroke="#fff" stroke-width="1.4"/>
<path d="M1591.5 1130.25h8l-4.0 4.5z" fill="#e6e8eb"/>
<rect x="1607" y="1116" width="33" height="32" fill="#343d48" />
<rect x="1612.5" y="1123.0" width="20" height="1.5" fill="#e6e8eb" />
<rect x="1612.5" y="1128.2" width="13" height="2.5" fill="#e6e8eb" />
<rect x="1612.5" y="1133.4" width="20" height="1.5" fill="#e6e8eb" />
<rect x="1612.5" y="1138.6" width="13" height="3.5" fill="#e6e8eb" />
<rect x="1643" y="1116" width="29" height="32" fill="#343d48" />
<rect x="1645.5" y="1122" width="20" height="20" fill="#f0f0f0" />
<rect x="1646.5" y="1123.0" width="4.4" height="4.4" fill="#333" />
<rect x="1655.7" y="1123.0" width="4.4" height="4.4" fill="#333" />
<rect x="1651.1" y="1127.6" width="4.4" height="4.4" fill="#333" />
<rect x="1660.3" y="1127.6" width="4.4" height="4.4" fill="#333" />
<rect x="1646.5" y="1132.2" width="4.4" height="4.4" fill="#333" />
<rect x="1655.7" y="1132.2" width="4.4" height="4.4" fill="#333" />
<rect x="1651.1" y="1136.8" width="4.4" height="4.4" fill="#333" />
<rect x="1660.3" y="1136.8" width="4.4" height="4.4" fill="#333" />
<rect x="1675" y="1116" width="143" height="32" fill="#343d48" />
<rect x="1676" y="1117.5" width="30" height="29" fill="#5b96cc" />
<path d="M1690 1121.5q3 5 3.5 10l5.5 9.5-6.5-3.5-2.5 4-2.5-4-6.5 3.5 5.5-9.5q0.5-5 3.5-10z" fill="#fff" stroke="none" stroke-width="1" />
<circle cx="1699" cy="1124" r="3" fill="none" stroke="#fff" stroke-width="1.2"/>
<path d="M1722 1121.5q3 5 3.5 10l5.5 9.5-6.5-3.5-2.5 4-2.5-4-6.5 3.5 5.5-9.5q0.5-5 3.5-10z" fill="#e6e8eb" stroke="none" stroke-width="1" />
<path d="M1731 1120l-3 5h3l-2 5" fill="none" stroke="#e6e8eb" stroke-width="1.2" />
<path d="M1755 1121.5q3 5 3.5 10l5.5 9.5-6.5-3.5-2.5 4-2.5-4-6.5 3.5 5.5-9.5q0.5-5 3.5-10z" fill="#e6e8eb" stroke="none" stroke-width="1" />
<text x="1778.5" y="1139.5" font-size="16.5" fill="#f0f2f4" textLength="17" lengthAdjust="spacingAndGlyphs" stroke="#f0f2f4" stroke-width="0.4">1:1</text>
<path d="M1800.5 1130.25h8l-4.0 4.5z" fill="#e6e8eb"/>
<rect x="1821" y="1116" width="52" height="32" fill="#343d48" />
<rect x="-2.2" y="-11" width="4.4" height="6" fill="#e6e8eb" transform="translate(1833.5,1132.5) rotate(0)"/><rect x="-2.2" y="-11" width="4.4" height="6" fill="#e6e8eb" transform="translate(1833.5,1132.5) rotate(45)"/><rect x="-2.2" y="-11" width="4.4" height="6" fill="#e6e8eb" transform="translate(1833.5,1132.5) rotate(90)"/><rect x="-2.2" y="-11" width="4.4" height="6" fill="#e6e8eb" transform="translate(1833.5,1132.5) rotate(135)"/><rect x="-2.2" y="-11" width="4.4" height="6" fill="#e6e8eb" transform="translate(1833.5,1132.5) rotate(180)"/><rect x="-2.2" y="-11" width="4.4" height="6" fill="#e6e8eb" transform="translate(1833.5,1132.5) rotate(225)"/><rect x="-2.2" y="-11" width="4.4" height="6" fill="#e6e8eb" transform="translate(1833.5,1132.5) rotate(270)"/><rect x="-2.2" y="-11" width="4.4" height="6" fill="#e6e8eb" transform="translate(1833.5,1132.5) rotate(315)"/>
<circle cx="1833.5" cy="1132.5" r="5.5" fill="none" stroke="#e6e8eb" stroke-width="4"/>
<path d="M1857.0 1130.25h8l-4.0 4.5z" fill="#e6e8eb"/>
<rect x="1876" y="1116" width="24" height="32" fill="#343d48" />
<path d="M1876.5 1132.5h20M1886.5 1122.5v20" fill="none" stroke="#fff" stroke-width="2.4" />
<rect x="1903" y="1116" width="37" height="32" fill="#343d48" />
<rect x="1912" y="1123" width="7" height="7" fill="none" stroke="#e6e8eb" stroke-width="1.2"/>
<circle cx="1930" cy="1131" r="4.5" fill="none" stroke="#e6e8eb" stroke-width="1.2"/>
<path d="M1920 1135l5 8h-10z" fill="none" stroke="#e6e8eb" stroke-width="1.2" />
<rect x="1943" y="1116" width="34" height="32" fill="#343d48" />
<rect x="1946" y="1130" width="9" height="9" fill="#f1c84b" />
<path d="M1950 1120l8 5v10l-8 5" fill="none" stroke="#5b9bd5" stroke-width="1.6" />
<path d="M1958 1120h10v14" fill="#3f78b8" stroke="none" stroke-width="1" />
<path d="M1958 1138l5 5 11-11" fill="none" stroke="#4caf50" stroke-width="2.6" />
<path d="M1951 1119v6M1948 1122h6" fill="none" stroke="#fff" stroke-width="1.3" />
<rect x="1980" y="1116" width="34" height="32" fill="#343d48" />
<rect x="1988" y="1123" width="21" height="17" fill="none" stroke="#e6e8eb" stroke-width="1.3"/>
<path d="M1992 1136l4-4M1992 1132v4h4M2005 1127l-4 4M2001 1127h4v4" fill="none" stroke="#e6e8eb" stroke-width="1.2" />
<rect x="2017" y="1116" width="29" height="32" fill="#343d48" />
<path d="M2020 1124h22M2020 1132.5h22M2020 1141h22" fill="none" stroke="#fff" stroke-width="2.6" />
<!-- p_overlay -->
<g opacity="0.3">
<path d="M1536.5 43H1826L1838.5 27L1851 43H1863q8 0 8 8V289q0 8-8 8H1536.5q-8 0-8-8V51q0-8 8-8Z" fill="#e4e4e4" stroke="none" stroke-width="1" />
<text x="1577" y="72" font-size="16" fill="#050505" textLength="243.5" lengthAdjust="spacingAndGlyphs" font-weight="bold" >Editar pinzamientos de contorno</text>
<text x="1577" y="93" font-size="16" fill="#050505" textLength="209" lengthAdjust="spacingAndGlyphs" font-weight="bold" >de sombreado no asociativo</text>
<text x="1577" y="120.7" font-size="16" fill="#141414" textLength="178.5" lengthAdjust="spacingAndGlyphs" >Modifique los objetos de</text>
<text x="1577" y="142.0" font-size="16" fill="#141414" textLength="240" lengthAdjust="spacingAndGlyphs" >sombreado no asociativos usando</text>
<text x="1577" y="163.3" font-size="16" fill="#141414" textLength="221.5" lengthAdjust="spacingAndGlyphs" >pinzamientos de contorno para</text>
<text x="1577" y="184.60000000000002" font-size="16" fill="#141414" textLength="199" lengthAdjust="spacingAndGlyphs" >alargar, añadir o eliminar un</text>
<text x="1577" y="205.9" font-size="16" fill="#141414" textLength="253" lengthAdjust="spacingAndGlyphs" >pinzamiento de vértice, convertir un</text>
<text x="1577" y="227.2" font-size="16" fill="#141414" textLength="243" lengthAdjust="spacingAndGlyphs" >pinzamiento de arista en una línea</text>
<text x="1577" y="248.5" font-size="16" fill="#141414" textLength="208" lengthAdjust="spacingAndGlyphs" >o un arco, o añadir un vértice.</text>
<text x="1577.5" y="276.5" font-size="16" fill="#0a0ab4" textLength="235" lengthAdjust="spacingAndGlyphs" text-decoration="underline">No volver a mostrar este mensaje</text>
<path d="M1553 55q-9.5 0-9.5 9.5q0 5 4 9l1.5 5h8l1.5-5q4-4 4-9q0-9.5-9.5-9.5Z" fill="#cfc67e" stroke="#3a3a3a" stroke-width="1.3" />
<path d="M1549.5 80.5h7M1550.5 83.5h5" fill="none" stroke="#2a2a2a" stroke-width="2" />
<circle cx="1854" cy="56" r="7.4" fill="#8c8c8c"/>
<path d="M1850.8 52.8l6.4 6.4M1857.2 52.8l-6.4 6.4" fill="none" stroke="#3c3c3c" stroke-width="2" />
<path d="M1841 271h15l-7.5 10.5z" fill="#4a4a4a" stroke="none" stroke-width="1" />
</g>
<defs><radialGradient id="bs" cx="0.5" cy="0.5" r="0.5"><stop offset="0.86" stop-color="#ffffff"/><stop offset="0.97" stop-color="#f1f1f1"/><stop offset="1" stop-color="#e4e4e4"/></radialGradient></defs>
<circle cx="1947.7" cy="1056.8" r="54.6" fill="url(#bs)"/>
<path d="M1921.5 1056.4L1933 1039.6L1947.7 1058.8L1962.9 1039.6L1973.9 1056L1959.9 1074.6H1935.3Z" fill="#cb0505" stroke="none" stroke-width="1" />
<path d="M1947.7 1058.8L1959.9 1074.6H1935.3Z" fill="#c40000" stroke="none" stroke-width="1" />
</svg>
</body></html>
